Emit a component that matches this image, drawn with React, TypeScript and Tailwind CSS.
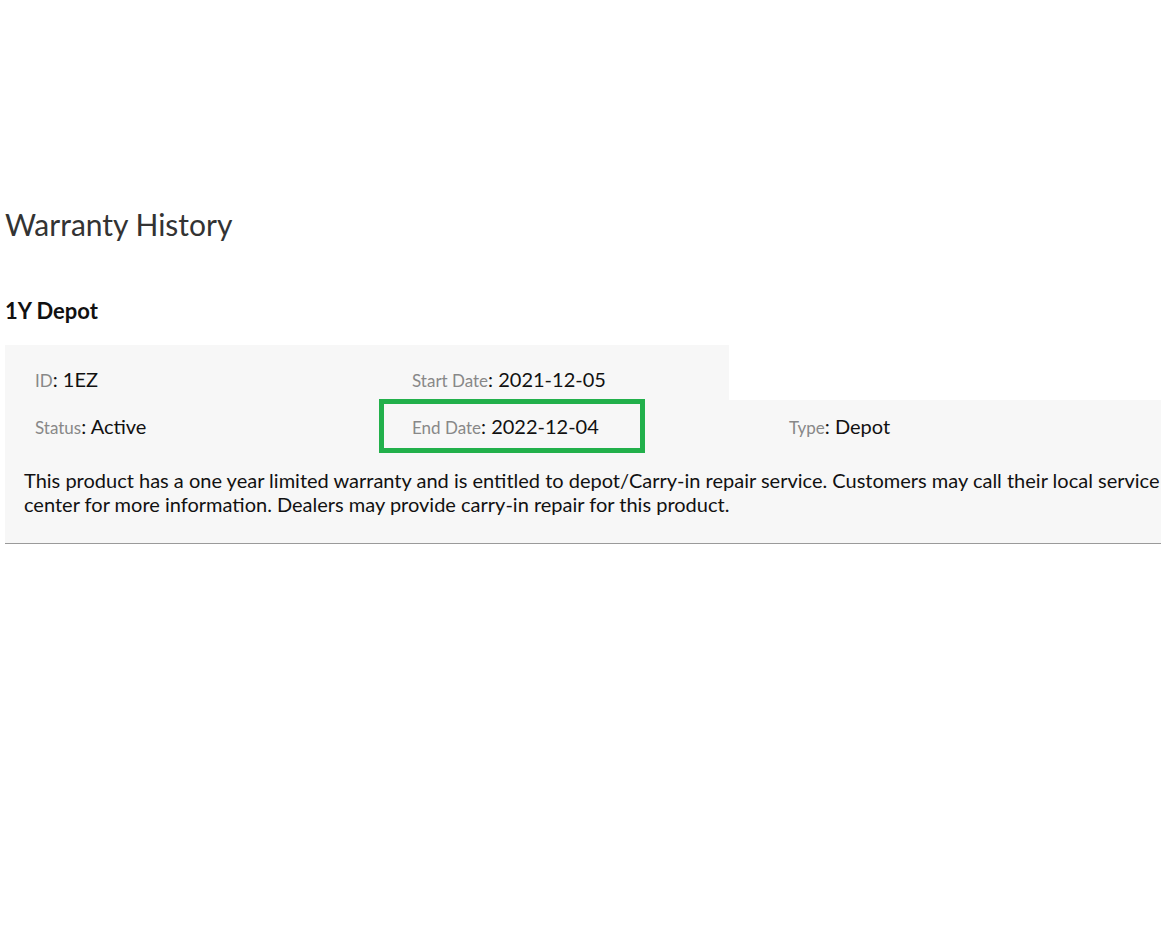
import React from "react";

function Field({ label, value }: { label: string; value: string }) {
  return (
    <div className="h-[24px] w-[377px] shrink-0 pl-[30px] leading-[24px] whitespace-nowrap">
      <span className="text-[17px] text-[#888888]">{label}</span>
      <span className="text-[20px] text-[#111111]">: {value}</span>
    </div>
  );
}

export default function App() {
  return (
    <div
      className="min-h-[945px] w-[1161px] bg-white overflow-hidden"
      style={{ fontFamily: "Lato, 'Noto Sans', sans-serif" }}
    >
      <div className="pt-[206px] pl-[5px]">
        <h1 className="text-[30px] leading-[36px] text-[#333333] font-normal">Warranty History</h1>
        <h2 className="mt-[55px] text-[22px] leading-[28px] font-bold text-[#111111]">1Y Depot</h2>
        <div className="mt-[20px] border-b border-[#9a9a9a]">
          <div className="flex w-[724px] bg-[#f7f7f7] pt-[22px] pb-[9px]">
            <Field label="ID" value="1EZ" />
            <Field label="Start Date" value="2021-12-05" />
          </div>
          <div className="relative flex bg-[#f7f7f7] pt-[14px] pb-[14px]">
            <Field label="Status" value="Active" />
            <Field label="End Date" value="2022-12-04" />
            <Field label="Type" value="Depot" />
            <div className="absolute left-[374px] top-[-1px] h-[54px] w-[266px] border-[5px] border-[#22b04b]" />
          </div>
          <div className="bg-[#f7f7f7] pl-[19px] pt-[16px] pb-[27px]">
            <p className="text-[20px] leading-[24px] text-[#111111]">
              This product has a one year limited warranty and is entitled to depot/Carry-in repair service. Customers may call their local service center for more information. Dealers may provide carry-in repair for this product.
            </p>
          </div>
        </div>
      </div>
    </div>
  );
}
